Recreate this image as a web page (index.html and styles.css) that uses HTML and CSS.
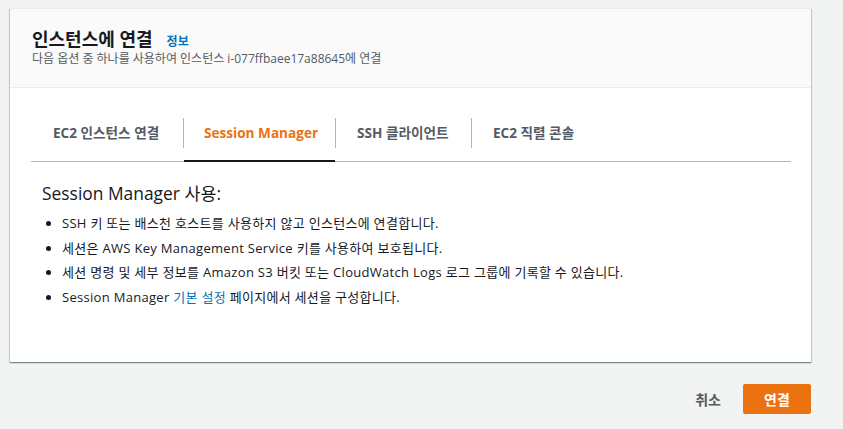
FILE: index.html
```html
<!DOCTYPE html>
<html lang="ko">
<head>
<meta charset="utf-8">
<link rel="stylesheet" href="styles.css">
</head>
<body>
<div class="page">
  <div class="card">
    <div class="card-header">
      <div class="title-row">
        <h2 class="title">인스턴스에 연결</h2>
        <a class="info">정보</a>
      </div>
      <div class="subtitle">다음 옵션 중 하나를 사용하여 인스턴스 i-077ffbaee17a88645에 연결</div>
    </div>
    <div class="card-body">
      <div class="tabs">
        <div class="tab tab-1">EC2 인스턴스 연결</div>
        <span class="sep"></span>
        <div class="tab tab-2 active">Session Manager</div>
        <span class="sep"></span>
        <div class="tab tab-3">SSH 클라이언트</div>
        <span class="sep"></span>
        <div class="tab tab-4">EC2 직렬 콘솔</div>
      </div>
      <div class="content">
        <h3 class="content-title">Session Manager 사용:</h3>
        <ul class="list">
          <li>SSH 키 또는 배스천 호스트를 사용하지 않고 인스턴스에 연결합니다.</li>
          <li>세션은 AWS Key Management Service 키를 사용하여 보호됩니다.</li>
          <li>세션 명령 및 세부 정보를 Amazon S3 버킷 또는 CloudWatch Logs 로그 그룹에 기록할 수 있습니다.</li>
          <li>Session Manager <a class="link">기본 설정</a> 페이지에서 세션을 구성합니다.</li>
        </ul>
      </div>
    </div>
  </div>
  <div class="footer">
    <button class="btn-cancel">취소</button>
    <button class="btn-primary">연결</button>
  </div>
</div>
</body>
</html>
```
FILE: styles.css
```css
* { box-sizing: border-box; }
html, body {
  margin: 0;
  padding: 0;
  background: #f2f3f3;
  font-family: "Open Sans", "Noto Sans CJK KR", sans-serif;
  color: #16191f;
}
.page {
  width: 843px;
  height: 429px;
  padding: 8px 32px 0 10px;
}
.card {
  width: 801px;
  height: 354px;
  background: #fff;
  border-top: 1px solid #eaeded;
  box-shadow: 0 1px 1px 0 rgba(0, 28, 36, 0.3), 1px 1px 1px 0 rgba(0, 28, 36, 0.15), -1px 1px 1px 0 rgba(0, 28, 36, 0.15);
}
.card-header {
  height: 79px;
  background: #fafafa;
  border-bottom: 1px solid #eaeded;
  padding: 18px 22px 0 22px;
}
.title-row {
  display: flex;
  align-items: baseline;
  gap: 14px;
}
.title {
  margin: 0;
  font-size: 18px;
  line-height: 24px;
  font-weight: 700;
  color: #16191f;
}
.info {
  font-size: 12px;
  font-weight: 700;
  color: #0073bb;
}
.subtitle {
  font-size: 12px;
  line-height: 16px;
  color: #545b64;
}
.card-body {
  padding: 20px 20px 0 21px;
}
.tabs {
  display: flex;
  align-items: flex-start;
  height: 54px;
  border-bottom: 1px solid #aab7b8;
}
.tab {
  flex: none;
  height: 54px;
  margin-bottom: -1px;
  padding-top: 15px;
  font-size: 13.6px;
  line-height: 20px;
  font-weight: 700;
  color: #545b64;
  border-bottom: 2px solid transparent;
  white-space: nowrap;
}
.tab-1 { width: 152px; padding-left: 22px; }
.tab-2 { width: 151px; padding-left: 20px; }
.tab-3 { width: 135px; padding-left: 21px; }
.tab-4 { padding-left: 21px; padding-right: 21px; }
.tab.active {
  color: #ec7211;
  border-bottom-color: #16191f;
}
.sep {
  flex: none;
  width: 1px;
  height: 30px;
  margin-top: 10px;
  background: #aab7b8;
}
.content {
  padding: 20px 0 0 11px;
}
.content-title {
  margin: 0;
  font-size: 17.4px;
  line-height: 22px;
  font-weight: 400;
}
.list {
  margin: 7px 0 0 0;
  padding-left: 20px;
  font-size: 13px;
  letter-spacing: 0.3px;
  line-height: 24.6px;
}
.link {
  color: #0073bb;
}
.footer {
  display: flex;
  justify-content: flex-end;
  align-items: center;
  width: 801px;
  margin-top: 22px;
  gap: 2px;
}
.btn-cancel {
  background: none;
  border: none;
  font-family: inherit;
  font-size: 14px;
  font-weight: 700;
  color: #545b64;
  padding: 4px 20px;
}
.btn-primary {
  width: 68px;
  height: 30px;
  background: #ec7211;
  border: none;
  border-radius: 2px;
  color: #fff;
  font-family: inherit;
  font-size: 14px;
  font-weight: 700;
}
```
